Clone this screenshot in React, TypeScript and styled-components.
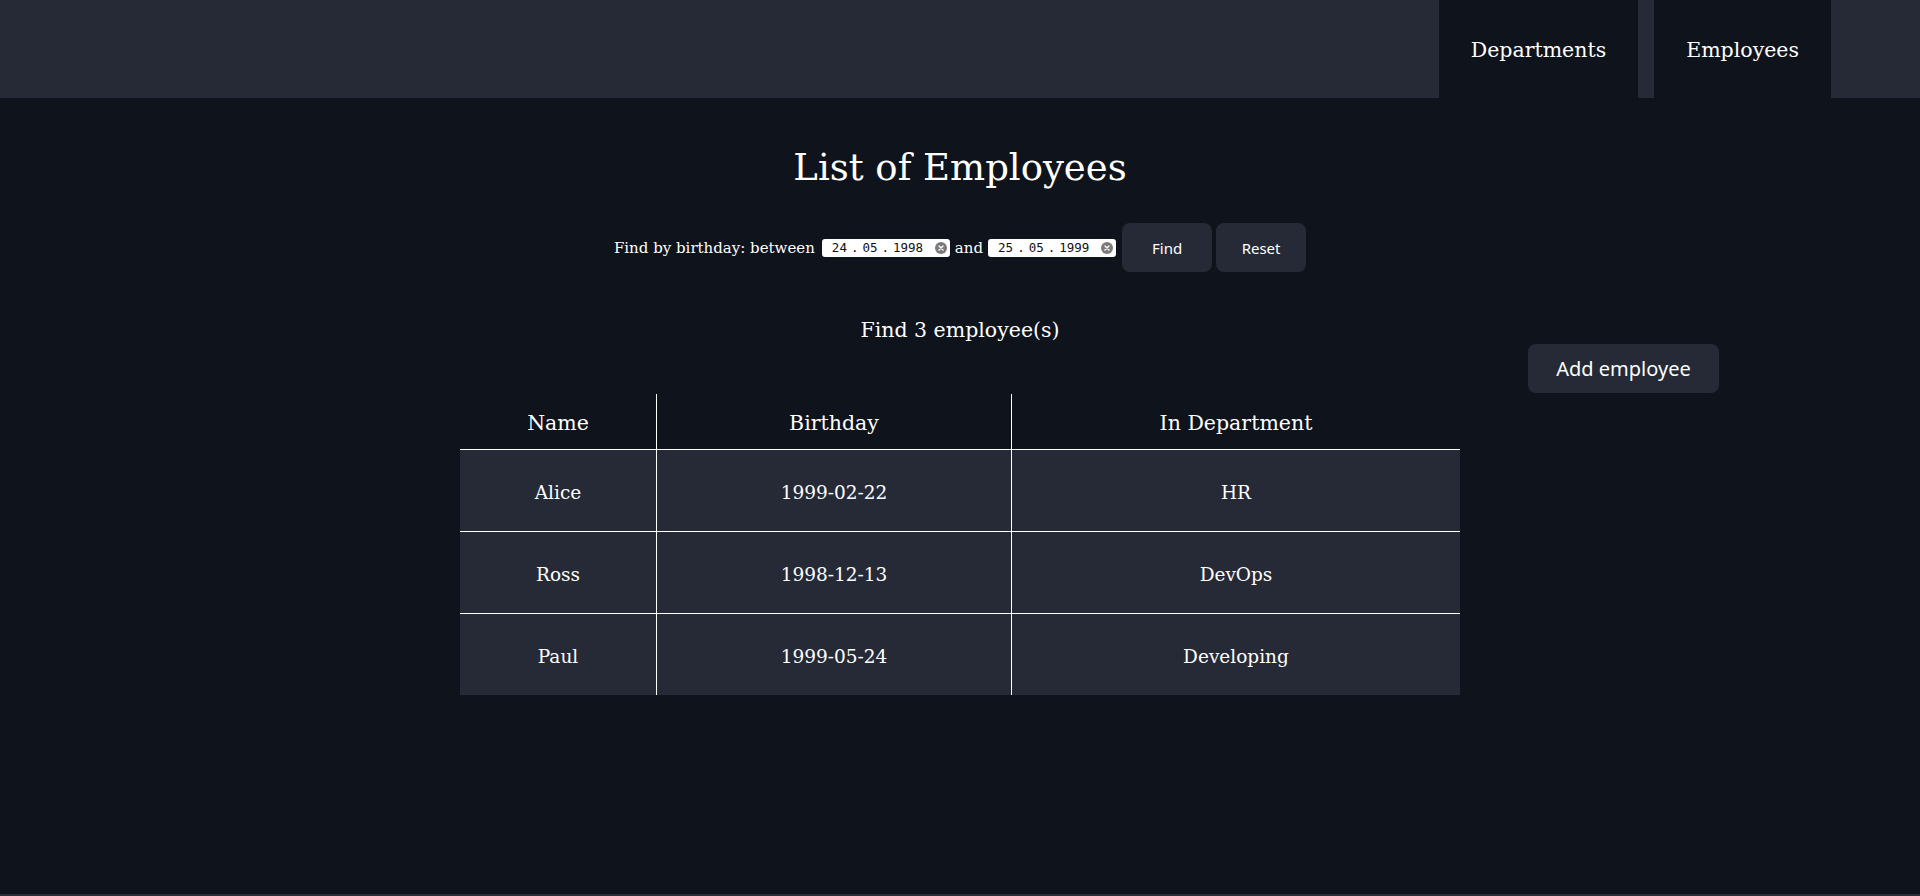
import React from "react";
import styled, { createGlobalStyle } from "styled-components";

const GlobalStyle = createGlobalStyle`
  html, body {
    margin: 0;
    padding: 0;
    background: #0f131b;
    color: rgba(255, 255, 255, 0.92);
    font-family: "DejaVu Serif", "Liberation Serif", serif;
  }
  * { box-sizing: border-box; }
`;

const Page = styled.div`
  display: flex;
  flex-direction: column;
  min-height: 100vh;
`;

const Header = styled.header`
  height: 98px;
  flex: 0 0 auto;
  background: #252a36;
  display: flex;
  justify-content: flex-end;
  gap: 16px;
  padding-right: 89px;
`;

const Tab = styled.a`
  display: flex;
  align-items: center;
  padding: 2px 32px 0;
  height: 100%;
  background: #0f131b;
  color: #fff;
  font-size: 20.5px;
  text-decoration: none;
  cursor: pointer;
`;

const Main = styled.main`
  flex: 1 0 auto;
  display: flex;
  flex-direction: column;
  align-items: stretch;
`;

const Title = styled.h1`
  margin: 46px 0 0;
  height: 48px;
  line-height: 48px;
  text-align: center;
  font-weight: 400;
  font-size: 37px;
  color: #fff;
`;

const FilterRow = styled.div`
  margin-top: 31px;
  display: flex;
  justify-content: center;
  align-items: center;
  height: 49px;
  font-size: 15px;
  color: #fff;
`;

const FilterLabel = styled.span<{ $gap?: string }>`
  margin: ${(p) => p.$gap ?? "0"};
`;

const DateBox = styled.span`
  display: inline-flex;
  align-items: center;
  width: 128px;
  height: 18px;
  padding: 0 3px 0 10px;
  background: #fff;
  border-radius: 3px;
  color: #111;
  font-family: "DejaVu Sans Mono", "Liberation Mono", monospace;
  font-size: 12.5px;
  gap: 4px;
`;

const DateIcon = styled.svg`
  margin-left: auto;
  flex: 0 0 auto;
`;

const Button = styled.button<{ $size?: number; $width?: number }>`
  height: 49px;
  width: ${(p) => p.$width ?? 90}px;
  padding: 0;
  border: 1px solid transparent;
  border-radius: 8px;
  background: #252a36;
  color: #fff;
  font-family: "Noto Sans", "Open Sans", sans-serif;
  font-size: ${(p) => p.$size ?? 15}px;
  font-weight: 400;
  cursor: pointer;
`;

const FindBtn = styled(Button)<{ $ml: number }>`
  margin-left: ${(p) => p.$ml}px;
`;

const Count = styled.h2`
  margin: 45px 0 0;
  height: 27px;
  line-height: 26px;
  text-align: center;
  font-size: 20.5px;
  font-weight: 400;
  color: #fff;
`;

const ActionBar = styled.div`
  display: flex;
  justify-content: flex-end;
  padding-right: 201px;
`;

const Table = styled.table`
  margin: 1px auto 0;
  width: 1000px;
  border-collapse: separate;
  border-spacing: 0;
  table-layout: fixed;
`;

const Th = styled.th<{ $last?: boolean }>`
  height: 56px;
  padding: 3px 0 0;
  font-weight: 400;
  font-size: 20.5px;
  color: #fff;
  border-bottom: 1px solid #fff;
  border-right: ${(p) => (p.$last ? "none" : "1px solid #fff")};
  vertical-align: middle;
`;

const Td = styled.td<{ $last?: boolean; $lastRow?: boolean }>`
  height: ${(p) => (p.$lastRow ? 81 : 82)}px;
  padding: 3px 0 0;
  text-align: center;
  font-size: 18.5px;
  background: #252a36;
  color: #fff;
  border-bottom: ${(p) => (p.$lastRow ? "none" : "1px solid #fff")};
  border-right: ${(p) => (p.$last ? "none" : "1px solid #fff")};
  vertical-align: middle;
`;

const Footer = styled.footer`
  height: 2px;
  flex: 0 0 auto;
  background: #2c2f37;
`;

const ClearIcon = () => (
  <DateIcon width="12" height="12" viewBox="0 0 12 12" aria-hidden="true">
    <circle cx="6" cy="6" r="6" fill="#7a7a7a" />
    <path d="M4 4 L8 8 M8 4 L4 8" stroke="#fff" strokeWidth="1.4" strokeLinecap="round" />
  </DateIcon>
);

const DateValue = ({ d, m, y }: { d: string; m: string; y: string }) => (
  <DateBox>
    <span>{d}</span>
    <span>.</span>
    <span>{m}</span>
    <span>.</span>
    <span>{y}</span>
    <ClearIcon />
  </DateBox>
);

const employees = [
  { name: "Alice", birthday: "1999-02-22", dept: "HR" },
  { name: "Ross", birthday: "1998-12-13", dept: "DevOps" },
  { name: "Paul", birthday: "1999-05-24", dept: "Developing" },
];

export default function App() {
  return (
    <>
      <GlobalStyle />
      <Page>
        <Header>
          <Tab>Departments</Tab>
          <Tab>Employees</Tab>
        </Header>
        <Main>
          <Title>List of Employees</Title>
          <FilterRow>
            <FilterLabel $gap="0 7px 0 0">Find by birthday: between</FilterLabel>
            <DateValue d="24" m="05" y="1998" />
            <FilterLabel $gap="0 5px">and</FilterLabel>
            <DateValue d="25" m="05" y="1999" />
            <FindBtn $ml={6}>Find</FindBtn>
            <FindBtn $ml={4}>Reset</FindBtn>
          </FilterRow>
          <Count>Find 3 employee(s)</Count>
          <ActionBar>
            <Button $size={20} $width={191}>
              Add employee
            </Button>
          </ActionBar>
          <Table>
            <colgroup>
              <col style={{ width: 197 }} />
              <col style={{ width: 355 }} />
              <col style={{ width: 448 }} />
            </colgroup>
            <thead>
              <tr>
                <Th>Name</Th>
                <Th>Birthday</Th>
                <Th $last>In Department</Th>
              </tr>
            </thead>
            <tbody>
              {employees.map((e, i) => {
                const lastRow = i === employees.length - 1;
                return (
                  <tr key={e.name}>
                    <Td $lastRow={lastRow}>{e.name}</Td>
                    <Td $lastRow={lastRow}>{e.birthday}</Td>
                    <Td $last $lastRow={lastRow}>
                      {e.dept}
                    </Td>
                  </tr>
                );
              })}
            </tbody>
          </Table>
        </Main>
        <Footer />
      </Page>
    </>
  );
}
